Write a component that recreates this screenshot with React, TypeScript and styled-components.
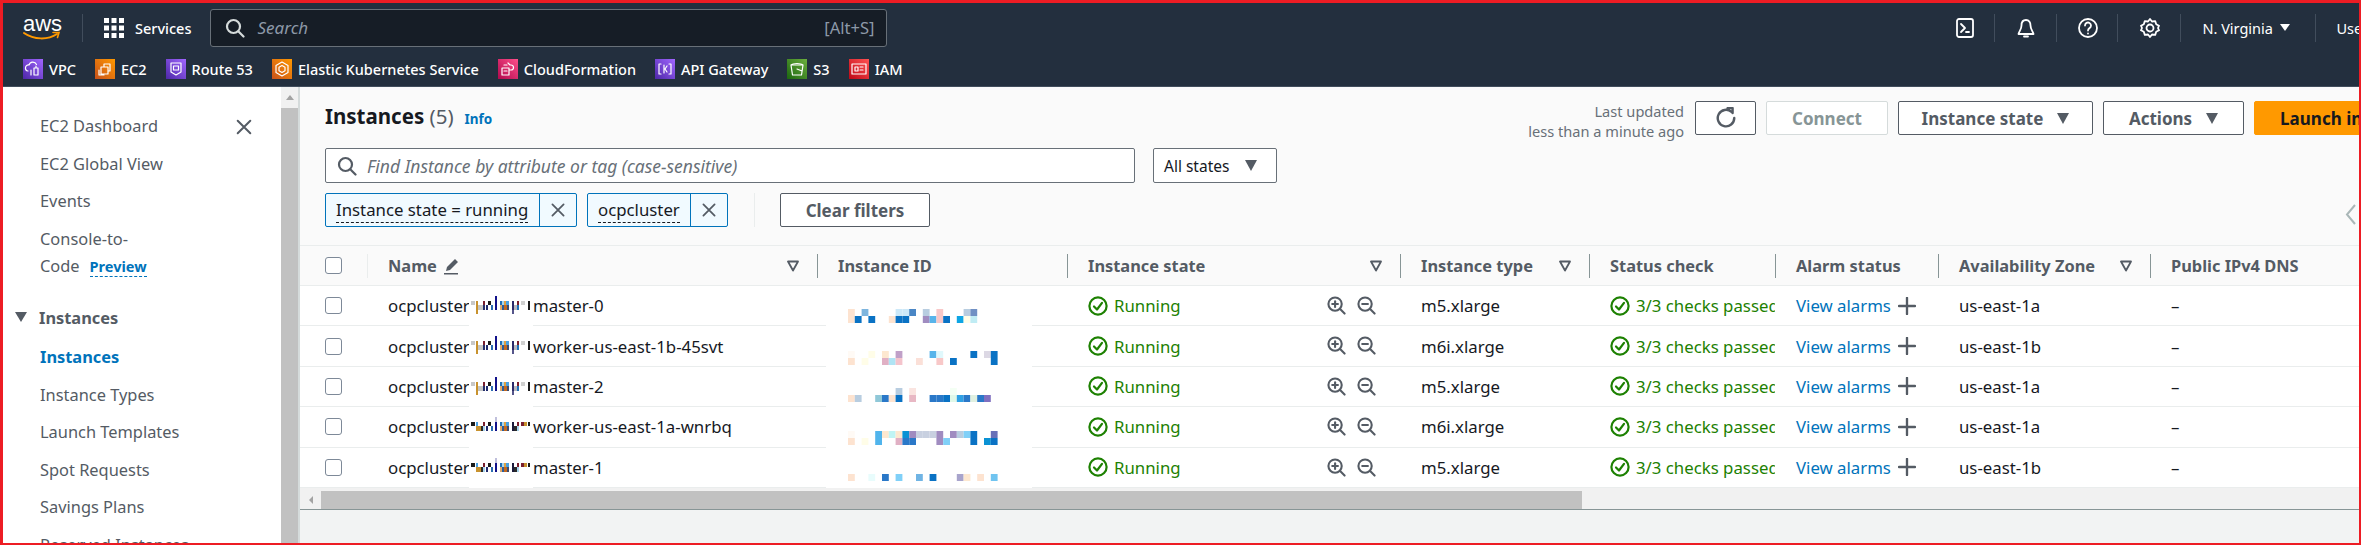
import styled, { createGlobalStyle } from "styled-components";
import type { ReactNode } from "react";

const GlobalStyle = createGlobalStyle`
  html, body {
    margin: 0;
    padding: 0;
    background: #fff;
  }
  * {
    box-sizing: border-box;
  }
`;

const FONT = `"Noto Sans", "Open Sans", sans-serif`;

const Page = styled.div`
  width: 2361px;
  height: 545px;
  border: solid #ed1c24;
  border-width: 3px 2px 2px 3px;
  display: flex;
  flex-direction: column;
  overflow: hidden;
  font-family: ${FONT};
  font-size: 16.8px;
  color: #16191f;
`;

/* top bar */
const Nav = styled.header`
  flex: 0 0 84px;
  background: #232f3e;
  border-bottom: 1px solid #414d5c;
  color: #fff;
  display: flex;
  flex-direction: column;
`;

const NavTop = styled.div`
  height: 49px;
  display: flex;
  align-items: center;
  padding-left: 20px;
`;

const LogoBox = styled.div`
  width: 38px;
  height: 26px;
  position: relative;
  flex-shrink: 0;
`;

const LogoText = styled.span`
  display: block;
  font-family: "Liberation Sans", sans-serif;
  font-size: 22px;
  line-height: 18px;
  letter-spacing: 0;
  text-align: center;
  color: #fff;
`;

const NavDivider = styled.span<{ $left: number }>`
  width: 1px;
  height: 28px;
  flex-shrink: 0;
  background: #414d5c;
  margin-left: ${({ $left }) => $left}px;
`;

const ServicesBtn = styled.div`
  display: flex;
  align-items: center;
  gap: 11px;
  margin-left: 21px;
  font-size: 14.5px;
  font-weight: 500;
  flex-shrink: 0;
`;

const SearchBox = styled.div`
  width: 677px;
  height: 38px;
  margin-left: 19px;
  flex-shrink: 0;
  background: #161d26;
  border: 1px solid #687078;
  border-radius: 3px;
  display: flex;
  align-items: center;
  padding: 0 12px 0 14px;
  gap: 12px;
  color: #8d99a8;
`;

const SearchHint = styled.span`
  font-style: italic;
  font-size: 17px;
`;

const Shortcut = styled.span`
  margin-left: auto;
  font-size: 16.5px;
`;

const NavRight = styled.div`
  display: flex;
  align-items: center;
  margin-left: 1068px;
  flex-shrink: 0;
`;

const NavIconBtn = styled.span<{ $left?: number }>`
  width: 20px;
  height: 20px;
  display: block;
  margin-left: ${({ $left }) => $left ?? 0}px;
  margin-right: 19px;
`;

const Region = styled.span`
  display: flex;
  align-items: center;
  gap: 7px;
  margin-left: 21px;
  font-size: 14.5px;
  width: 113px;
`;

const RegionCaret = styled.span`
  width: 0;
  height: 0;
  border-left: 5px solid transparent;
  border-right: 5px solid transparent;
  border-top: 7px solid #fff;
`;

const UserLabel = styled.span`
  margin-left: 20px;
  font-size: 14.5px;
`;

const NavBottom = styled.div`
  flex: 1;
  display: flex;
  align-items: center;
  padding-left: 20px;
  gap: 19px;
  font-size: 14.5px;
  font-weight: 500;
`;

const ShortcutItem = styled.span`
  display: flex;
  align-items: center;
  gap: 6px;
  flex-shrink: 0;
`;

const ServiceIcon = styled.span<{ $from: string; $to: string }>`
  width: 20px;
  height: 20px;
  display: block;
  background: linear-gradient(45deg, ${({ $from }) => $from}, ${({ $to }) => $to});
`;

/* body */
const Body = styled.div`
  flex: 1;
  min-height: 0;
  display: flex;
`;

const Sidebar = styled.aside`
  flex: 0 0 278px;
  background: #fff;
  color: #545b64;
  font-size: 16.4px;
  padding: 20px 0 0 37px;
  position: relative;
  overflow: hidden;
`;

const SideItem = styled.div<{ $active?: boolean }>`
  height: 37.5px;
  line-height: 37.5px;
  white-space: nowrap;
  color: ${({ $active }) => ($active ? "#0073bb" : "#545b64")};
  font-weight: ${({ $active }) => ($active ? 700 : 400)};
`;

const SideMulti = styled.div`
  line-height: 27px;
  margin-top: 5px;
`;

const PreviewTag = styled.span`
  color: #0073bb;
  font-size: 14.5px;
  font-weight: 700;
  margin-left: 10px;
  border-bottom: 1px dashed #0073bb;
`;

const SideSection = styled.div`
  display: flex;
  align-items: center;
  gap: 12px;
  height: 37.5px;
  margin: 19px 0 2px -25px;
  font-weight: 700;
`;

const SideCaret = styled.span`
  width: 0;
  height: 0;
  border-left: 6px solid transparent;
  border-right: 6px solid transparent;
  border-top: 10px solid #545b64;
`;

const SideClose = styled.span`
  position: absolute;
  left: 232px;
  top: 31px;
  width: 18px;
  height: 18px;
`;

const ScrollV = styled.div`
  flex: 0 0 17px;
  background: #f1f1f1;
  display: flex;
  flex-direction: column;
  align-items: center;
`;

const ScrollArrowUp = styled.span`
  flex: 0 0 21px;
  display: flex;
  align-items: center;
  justify-content: center;
  &::before {
    content: "";
    border-left: 4px solid transparent;
    border-right: 4px solid transparent;
    border-bottom: 5px solid #a3a3a3;
  }
`;

const ScrollThumbV = styled.span`
  flex: 1;
  width: 100%;
  background: #c1c1c1;
`;

const Content = styled.main`
  flex: 1;
  min-width: 0;
  background: #f2f3f3;
  border-left: 2px solid #d5dbdb;
  display: flex;
  flex-direction: column;
  position: relative;
  overflow: hidden;
`;

const Head = styled.section`
  flex: 0 0 158px;
  background: #fafafa;
  padding-left: 25px;
`;

const TitleRow = styled.div`
  width: 2138px;
  height: 61px;
  padding-top: 14px;
  display: flex;
  align-items: flex-start;
`;

const TitleBlock = styled.div`
  display: flex;
  align-items: baseline;
  gap: 11px;
`;

const Title = styled.h1`
  margin: 0;
  font-size: 20.5px;
  line-height: 30px;
  font-weight: 700;
  color: #16191f;
`;

const TitleCount = styled.span`
  font-weight: 400;
  color: #545b64;
`;

const InfoLink = styled.span`
  font-size: 13.5px;
  font-weight: 700;
  color: #0073bb;
`;

const LastUpdated = styled.div`
  flex: 1;
  text-align: right;
  font-size: 14.6px;
  line-height: 20px;
  color: #687078;
  margin-right: 11px;
`;

const Button = styled.button<{ $width: number; $kind?: "disabled" | "primary" }>`
  width: ${({ $width }) => $width}px;
  height: 34px;
  flex-shrink: 0;
  margin-right: 10px;
  display: flex;
  align-items: center;
  justify-content: center;
  gap: 14px;
  font-family: inherit;
  font-size: 17px;
  font-weight: 700;
  white-space: nowrap;
  border-radius: 2px;
  padding: 0;
  border: 1px solid
    ${({ $kind }) =>
      $kind === "disabled" ? "#d5dbdb" : $kind === "primary" ? "#ff9900" : "#545b64"};
  background: ${({ $kind }) => ($kind === "primary" ? "#ff9900" : "#fff")};
  color: ${({ $kind }) =>
    $kind === "disabled" ? "#879596" : $kind === "primary" ? "#16191f" : "#545b64"};
`;

const ButtonCaret = styled.span`
  width: 0;
  height: 0;
  border-left: 6.5px solid transparent;
  border-right: 6.5px solid transparent;
  border-top: 11px solid #545b64;
`;

const FilterRow = styled.div`
  display: flex;
  gap: 18px;
`;

const FilterInput = styled.div`
  width: 810px;
  height: 35px;
  background: #fff;
  border: 1px solid #687078;
  border-radius: 2px;
  display: flex;
  align-items: center;
  gap: 10px;
  padding-left: 11px;
  font-size: 17.5px;
  font-style: italic;
  color: #687078;
`;

const StateSelect = styled.div`
  width: 124px;
  height: 35px;
  background: #fff;
  border: 1px solid #687078;
  border-radius: 2px;
  display: flex;
  align-items: center;
  gap: 16px;
  padding-left: 10px;
  font-size: 15.5px;
  color: #16191f;
`;

const ChipRow = styled.div`
  margin-top: 10px;
  display: flex;
  align-items: center;
  height: 34px;
`;

const Chip = styled.div<{ $labelWidth: number }>`
  height: 34px;
  display: flex;
  flex-shrink: 0;
  margin-right: 10px;
  background: #f1faff;
  border: 1px solid #0073bb;
  border-radius: 2px;
  & > span:first-child {
    width: ${({ $labelWidth }) => $labelWidth}px;
  }
`;

const ChipLabel = styled.span`
  padding: 0 0 0 10px;
  line-height: 32px;
  white-space: nowrap;
  overflow: hidden;
  color: #16191f;
`;

const ChipLabelText = styled.span`
  border-bottom: 1px dashed #16191f;
  padding-bottom: 1px;
`;

const ChipClose = styled.span`
  width: 37px;
  border-left: 1px solid #0073bb;
  display: flex;
  align-items: center;
  justify-content: center;
`;

const ChipDivider = styled.span`
  width: 1px;
  height: 34px;
  background: #eaeded;
  margin: 0 25px 0 16px;
`;

const ClearBtn = styled(Button)`
  margin: 0;
`;

const Chevron = styled.span`
  position: absolute;
  left: 2045px;
  top: 117px;
  width: 12px;
  height: 21px;
`;

/* table */
const COLUMNS = "67px 450px 250px 333px 189px 186px 163px 212px 208px";

const TableHeader = styled.div`
  flex: 0 0 41px;
  display: grid;
  grid-template-columns: ${COLUMNS};
  background: #fafafa;
  border-top: 1px solid #eaeded;
  border-bottom: 1px solid #eaeded;
`;

const HeadCell = styled.div<{ $first?: boolean }>`
  position: relative;
  display: flex;
  align-items: center;
  padding: 0 18px 0 21px;
  font-size: 16.4px;
  font-weight: 700;
  color: #545b64;
  white-space: nowrap;
  &::before {
    content: "";
    position: absolute;
    left: 0;
    top: 8px;
    bottom: 7px;
    width: 1px;
    background: ${({ $first }) => ($first ? "#eaeded" : "#879596")};
  }
`;

const CheckCell = styled.div`
  display: flex;
  align-items: center;
  padding-left: 25px;
`;

const Checkbox = styled.span`
  width: 17px;
  height: 17px;
  display: block;
  background: #fff;
  border: 1.5px solid #7d8998;
  border-radius: 3px;
`;

const FilterMark = styled.span`
  margin-left: auto;
  width: 12px;
  height: 12px;
  display: block;
  & svg {
    display: block;
  }
`;

const Row = styled.div`
  flex: 0 0 40.4px;
  display: grid;
  grid-template-columns: ${COLUMNS};
  background: #fff;
  border-bottom: 1px solid #eaeded;
`;

const Cell = styled.div`
  position: relative;
  display: flex;
  align-items: center;
  padding-left: 21px;
  min-width: 0;
  white-space: nowrap;
  overflow: hidden;
  color: #16191f;
`;

const OverlayCell = styled(Cell)`
  overflow: visible;
`;

const Patch = styled.span<{ $left: number; $width: number }>`
  position: absolute;
  left: ${({ $left }) => $left}px;
  width: ${({ $width }) => $width}px;
  top: 0;
  bottom: -1px;
  background: #fff;
`;

const PatchDrawing = styled.svg<{ $left: number; $top: number }>`
  position: absolute;
  left: ${({ $left }) => $left}px;
  top: ${({ $top }) => $top}px;
`;

const NamePrefix = styled.span`
  flex: 0 0 145px;
`;

const StateWrap = styled.span`
  display: flex;
  align-items: center;
  gap: 6px;
  color: #1d8102;
`;

const ZoomIcons = styled.span`
  position: absolute;
  left: 260px;
  top: 10px;
  display: flex;
  gap: 11px;
`;

const AlarmLink = styled.span`
  color: #0073bb;
`;

const AlarmPlus = styled.span`
  width: 18px;
  height: 18px;
  display: block;
  margin-left: 7px;
`;

const HScroll = styled.div`
  flex: 0 0 21px;
  background: #f1f1f1;
  display: flex;
  align-items: stretch;
  padding-top: 3px;
`;

const HScrollArrow = styled.span`
  flex: 0 0 21px;
  display: flex;
  align-items: center;
  justify-content: center;
  &::before {
    content: "";
    border-top: 4px solid transparent;
    border-bottom: 4px solid transparent;
    border-right: 4px solid #a3a3a3;
  }
`;

const HScrollThumb = styled.span`
  width: 1261px;
  background: #c1c1c1;
`;

const Footer = styled.div`
  flex: 1;
  background: #f2f3f3;
  border-top: 1px solid #879596;
`;

/* icons */
type SvgProps = { size?: number; color?: string; width?: number; children: ReactNode };

const Line = ({ size = 20, color = "#fff", width = 2, children }: SvgProps) => (
  <svg
    width={size}
    height={size}
    viewBox="0 0 20 20"
    fill="none"
    stroke={color}
    strokeWidth={width}
    strokeLinecap="round"
    strokeLinejoin="round"
    style={{ display: "block" }}
  >
    {children}
  </svg>
);

const SearchGlyph = ({ color, size = 20 }: { color: string; size?: number }) => (
  <Line size={size} color={color} width={2.2}>
    <circle cx="8.5" cy="8.5" r="6.5" />
    <path d="M13.5 13.5 18.5 18.5" />
  </Line>
);

const CrossGlyph = ({ color = "#545b64", size = 18 }: { color?: string; size?: number }) => (
  <Line size={size} color={color} width={2.2}>
    <path d="M3 3 17 17M17 3 3 17" />
  </Line>
);

const OkGlyph = () => (
  <Line color="#1d8102" width={2.2}>
    <circle cx="10" cy="10" r="8.6" />
    <path d="M6 10.5 9 13.5 14 6.8" />
  </Line>
);

const ZoomGlyph = ({ plus }: { plus?: boolean }) => (
  <Line size={19} color="#545b64" width={2.2}>
    <circle cx="8.5" cy="8.5" r="7" />
    <path d="M13.8 13.8 18.5 18.5M5.5 8.5h6" />
    {plus && <path d="M8.5 5.5v6" />}
  </Line>
);

const TriangleOutline = () => (
  <FilterMark>
    <svg width="12" height="12" viewBox="0 0 12 12" fill="none" stroke="#545b64" strokeWidth="1.8" strokeLinejoin="round">
      <path d="M1 1.5h10L6 10.5z" />
    </svg>
  </FilterMark>
);

const SERVICE_GLYPHS: Record<string, ReactNode> = {
  vpc: <path d="M5 12a3 3 0 0 1 1-6 4 4 0 0 1 7.500-.5M11 9h4v7h-4zM13 9V7M8 11v5" />,
  ec2: <path d="M6 8h7v7H6zM9 8V5h6v7h-2M4 11v5h5" />,
  route53: <path d="M5 4h10v9l-5 3-5-3zM7.500 7h5v4h-5z" />,
  eks: <path d="M10 3l6 3.500v7L10 17l-6-3.500v-7zM10 6.500l3 1.800v3.400l-3 1.800-3-1.800V8.300z" />,
  cloudformation: <path d="M4 9h7v7H4zM6 6h3M11 11h2a2.500 2.500 0 0 0 0-5h-1l-2-2M6 12h3" />,
  api: <path d="M6 5H4v10h2M14 5h2v10h-2M9 6v8M12 7l-2 3 2 3" />,
  s3: <path d="M4 6h12l-1.500 10h-9zM4 6c2-2 10-2 12 0M10 10l5 2" />,
  iam: <path d="M3 5h14v10H3zM6 8h3v4H6zM11 8h3M11 11h3" />,
};

const SHORTCUTS = [
  { key: "vpc", label: "VPC", from: "#4d27a8", to: "#a166ff" },
  { key: "ec2", label: "EC2", from: "#c8511b", to: "#ff9900" },
  { key: "route53", label: "Route 53", from: "#4d27a8", to: "#a166ff" },
  { key: "eks", label: "Elastic Kubernetes Service", from: "#c8511b", to: "#ff9900" },
  { key: "cloudformation", label: "CloudFormation", from: "#b0084d", to: "#ff4f8b" },
  { key: "api", label: "API Gateway", from: "#4d27a8", to: "#a166ff" },
  { key: "s3", label: "S3", from: "#1b660f", to: "#6cae3e" },
  { key: "iam", label: "IAM", from: "#bd0816", to: "#ff5252" },
];

/* redaction mosaics, taken block by block from the picture */
const P = {
  peach: "#fde3d0",
  cream: "#fffde8",
  blue: "#0a72c4",
  mid: "#2a78c8",
  sky: "#58b4ea",
  pale: "#cce8f8",
  steel: "#b8cde0",
  pink: "#f8c8c8",
  rose: "#e0b0c4",
  lilac: "#a08cc0",
  ice: "#c0ecf4",
};

type Block = [number, number, string];

const ID_MOSAICS: { top: number; blocks: Block[] }[] = [
  {
    top: 23,
    blocks: [
      [0, 0, P.peach], [2, 0, "#7db5de"], [7, 0, P.pale], [8, 0, P.pale], [9, 0, "#4a86c5"], [11, 0, P.steel],
      [13, 0, P.pink], [17, 0, P.steel], [18, 0, "#7090c4"],
      [0, 1, P.peach], [1, 1, P.blue], [3, 1, P.blue], [6, 1, P.peach], [7, 1, P.blue], [8, 1, P.blue],
      [11, 1, P.lilac], [12, 1, P.sky], [13, 1, P.pink], [14, 1, P.blue], [16, 1, "#0ea5e4"], [17, 1, P.cream], [18, 1, P.ice],
    ],
  },
  {
    top: 25,
    blocks: [
      [0, 0, "#fffaf5"], [3, 0, P.cream], [5, 0, "#fde8d0"], [7, 0, "#c0a0c8"], [12, 0, P.sky], [13, 0, "#e0f8fc"],
      [18, 0, P.blue], [20, 0, "#dcd8e4"], [21, 0, P.blue],
      [0, 1, P.peach], [2, 1, P.cream], [5, 1, P.rose], [6, 1, "#b0e4f4"], [7, 1, "#f4c4cc"], [10, 1, "#fbe0d8"],
      [13, 1, P.pink], [15, 1, P.blue], [21, 1, P.blue],
    ],
  },
  {
    top: 21,
    blocks: [
      [7, 0, P.steel], [9, 0, "#fae4e0"], [15, 0, "#f4fff4"],
      [0, 1, P.peach], [1, 1, P.steel], [4, 1, "#90c8d8"], [5, 1, P.mid], [6, 1, P.peach], [7, 1, P.blue], [9, 1, "#e8b8c4"],
      [12, 1, P.mid], [13, 1, P.mid], [14, 1, P.blue], [15, 1, "#e0f8e8"], [16, 1, "#30a0e4"], [17, 1, P.mid],
      [18, 1, "#e0f0e0"], [19, 1, P.mid], [20, 1, "#8070c0"],
    ],
  },
  {
    top: 24,
    blocks: [
      [0, 0, "#fffaf5"], [4, 0, "#50b4ec"], [5, 0, "#fde8d0"], [6, 0, "#c0f4f4"], [7, 0, "#fde8d0"], [8, 0, "#0a92d4"],
      [9, 0, P.lilac], [10, 0, "#c8d0e0"], [11, 0, "#c8d0e0"], [12, 0, "#c8d0e0"], [13, 0, P.lilac], [15, 0, P.lilac],
      [16, 0, P.steel], [17, 0, "#80d0f8"], [18, 0, P.blue], [21, 0, "#6870b8"],
      [0, 1, P.peach], [2, 1, P.cream], [4, 1, "#50b4ec"], [7, 1, P.rose], [8, 1, P.mid], [9, 1, P.mid], [13, 1, P.lilac],
      [14, 1, "#80d0f8"], [18, 1, P.blue], [20, 1, "#0a92d4"], [21, 1, P.blue],
    ],
  },
  {
    top: 26,
    blocks: [
      [0, 0, P.peach], [3, 0, "#e8fcfc"], [5, 0, P.mid], [7, 0, "#80d0f8"], [10, 0, "#70b4e4"], [12, 0, P.blue],
      [16, 0, "#a8a4cc"], [17, 0, "#fde8d0"], [19, 0, P.peach], [21, 0, "#70c4f0"],
    ],
  },
];

type Bar = [number, number, number, number, string];

const NAME_BARS_LIGHT: Bar[] = [
  [2, 5, 4, 4, "#c8c8c8"], [7, 5, 2, 13, "#c8922e"], [9, 9, 5, 5, "#c4c4c4"], [14, 5, 2, 4, "#7a1f2e"], [14, 9, 2, 5, "#26306a"],
  [17, 9, 2, 5, "#1f2a6e"], [19, 5, 3, 4, "#1a1a1a"], [22, 9, 2, 5, "#2a6cb0"], [26, 0, 2, 14, "#12128a"],
  [31, 5, 2, 4, "#1f6fb8"], [31, 9, 2, 5, "#e0a868"], [33, 5, 2, 4, "#a8d4ec"], [33, 9, 2, 5, "#2a5c9c"],
  [35, 5, 2, 4, "#e0a040"], [35, 9, 3, 5, "#c06820"], [37, 5, 3, 4, "#4aa0e0"], [38, 9, 2, 5, "#3a4a70"],
  [43, 5, 2, 9, "#2a2a6a"], [43, 14, 2, 4, "#55558a"], [45, 9, 3, 5, "#b8b8c0"], [48, 5, 2, 4, "#7a1f2e"], [48, 9, 2, 5, "#1f6fb8"],
  [52, 5, 4, 4, "#d0d0d0"], [59, 5, 2, 9, "#1a1a1a"],
];

const NAME_BARS_DARK: Bar[] = [
  [2, 5, 4, 4, "#1a1a1a"], [7, 5, 2, 4, "#4aa0e0"], [7, 9, 5, 5, "#c8922e"], [12, 9, 2, 5, "#2a2a2a"], [14, 5, 2, 4, "#7a1f2e"], [14, 9, 2, 5, "#a8d4ec"],
  [17, 9, 2, 5, "#1f2a6e"], [19, 5, 3, 4, "#1a1a1a"], [22, 9, 2, 5, "#2a6cb0"], [26, 0, 2, 5, "#c0c0dc"], [26, 5, 2, 9, "#12128a"],
  [31, 5, 2, 4, "#1f6fb8"], [31, 9, 2, 5, "#e0a868"], [33, 5, 2, 4, "#a8d4ec"], [33, 9, 2, 5, "#2a5c9c"],
  [35, 5, 2, 4, "#e0a040"], [35, 9, 3, 5, "#c06820"], [37, 5, 3, 4, "#4aa0e0"], [38, 9, 2, 5, "#3a4a70"],
  [43, 5, 2, 9, "#1a1a3a"], [45, 9, 3, 5, "#2a2a2a"], [48, 5, 2, 4, "#7a1f2e"], [48, 9, 2, 5, "#a8d4ec"],
  [52, 5, 3, 4, "#7a1f2e"], [55, 5, 3, 4, "#c8922e"], [59, 5, 2, 4, "#1a1a1a"],
];

const ROWS = [
  { suffix: "master-0", dark: false, type: "m5.xlarge", zone: "us-east-1a" },
  { suffix: "worker-us-east-1b-45svt", dark: false, type: "m6i.xlarge", zone: "us-east-1b" },
  { suffix: "master-2", dark: false, type: "m5.xlarge", zone: "us-east-1a" },
  { suffix: "worker-us-east-1a-wnrbq", dark: true, type: "m6i.xlarge", zone: "us-east-1a" },
  { suffix: "master-1", dark: true, type: "m5.xlarge", zone: "us-east-1b" },
];

const SIDE_BELOW = ["Instance Types", "Launch Templates", "Spot Requests", "Savings Plans", "Reserved Instances"];

const App = () => {
  return (
    <>
      <GlobalStyle />
      <Page>
        <Nav>
          <NavTop>
            <LogoBox>
              <LogoText>aws</LogoText>
              <svg width="38" height="10" viewBox="0 0 38 10" fill="none" style={{ position: "absolute", left: 0, bottom: 0 }}>
                <path d="M1 2c10 7 24 7 33 1" stroke="#ff9900" strokeWidth="2" strokeLinecap="round" />
                <path d="M30 1.500h6l-1.500 5" stroke="#ff9900" strokeWidth="1.600" strokeLinecap="round" />
              </svg>
            </LogoBox>
            <NavDivider $left={21} />
            <ServicesBtn>
              <svg width="20" height="20" viewBox="0 0 20 20" fill="#fff">
                {[0, 7.5, 15].flatMap((y) =>
                  [0, 7.5, 15].map((x) => <rect key={`${x}-${y}`} x={x} y={y} width="5" height="5" />)
                )}
              </svg>
              Services
            </ServicesBtn>
            <SearchBox>
              <SearchGlyph color="#d5dbdb" />
              <SearchHint>Search</SearchHint>
              <Shortcut>[Alt+S]</Shortcut>
            </SearchBox>
            <NavRight>
              <NavIconBtn>
                <Line width={1.8}>
                  <rect x="2" y="1" width="16" height="18" rx="2" />
                  <path d="M6 6l4 4-4 4M11 14h3" />
                </Line>
              </NavIconBtn>
              <NavDivider $left={0} />
              <NavIconBtn $left={21}>
                <Line width={1.8}>
                  <path d="M10 2c-3 0-4.500 2.500-4.500 5.500 0 4-2.500 6-3 8.500h15c-.5-2.500-3-4.500-3-8.500C14.500 4.500 13 2 10 2zM8 18.500h4" />
                </Line>
              </NavIconBtn>
              <NavDivider $left={1} />
              <NavIconBtn $left={21}>
                <Line width={1.8}>
                  <circle cx="10" cy="10" r="9" />
                  <path d="M7 7.500a3 3 0 1 1 4.500 2.600c-1 .6-1.500 1.200-1.500 2.400M10 15.500v.1" />
                </Line>
              </NavIconBtn>
              <NavDivider $left={0} />
              <NavIconBtn $left={22}>
                <Line width={1.8}>
                  <path d="M10 1l2 2.500 3.200-.4 1 3.100 2.800 1.500L18 10l1 2.300-2.800 1.500-1 3.100-3.200-.4L10 19l-2-2.500-3.200.4-1-3.100L1 12.300 2 10 1 7.700l2.800-1.500 1-3.100 3.200.4z" />
                  <circle cx="10" cy="10" r="3.500" />
                </Line>
              </NavIconBtn>
              <NavDivider $left={1} />
              <Region>
                N. Virginia
                <RegionCaret />
              </Region>
              <NavDivider $left={0} />
              <UserLabel>User</UserLabel>
            </NavRight>
          </NavTop>
          <NavBottom>
            {SHORTCUTS.map((s) => (
              <ShortcutItem key={s.key}>
                <ServiceIcon $from={s.from} $to={s.to}>
                  <Line width={1.2}>{SERVICE_GLYPHS[s.key]}</Line>
                </ServiceIcon>
                {s.label}
              </ShortcutItem>
            ))}
          </NavBottom>
        </Nav>
        <Body>
          <Sidebar>
            <SideClose>
              <CrossGlyph />
            </SideClose>
            <SideItem>EC2 Dashboard</SideItem>
            <SideItem>EC2 Global View</SideItem>
            <SideItem>Events</SideItem>
            <SideMulti>
              Console-to-
              <br />
              Code<PreviewTag>Preview</PreviewTag>
            </SideMulti>
            <SideSection>
              <SideCaret />
              Instances
            </SideSection>
            <SideItem $active>Instances</SideItem>
            {SIDE_BELOW.map((label) => (
              <SideItem key={label}>{label}</SideItem>
            ))}
          </Sidebar>
          <ScrollV>
            <ScrollArrowUp />
            <ScrollThumbV />
          </ScrollV>
          <Content>
            <Head>
              <TitleRow>
                <TitleBlock>
                  <Title>
                    Instances <TitleCount>(5)</TitleCount>
                  </Title>
                  <InfoLink>Info</InfoLink>
                </TitleBlock>
                <LastUpdated>
                  Last updated
                  <br />
                  less than a minute ago
                </LastUpdated>
                <Button $width={61} aria-label="Refresh">
                  <Line size={22} color="#545b64" width={2.2}>
                    <path d="M15 4.500A7.500 7.500 0 1 0 17.500 10M11.500 1h4.500v4.500" />
                  </Line>
                </Button>
                <Button $width={122} $kind="disabled">
                  Connect
                </Button>
                <Button $width={195}>
                  Instance state
                  <ButtonCaret />
                </Button>
                <Button $width={141}>
                  Actions
                  <ButtonCaret />
                </Button>
                <Button $width={199} $kind="primary">
                  Launch instances
                </Button>
              </TitleRow>
              <FilterRow>
                <FilterInput>
                  <SearchGlyph color="#545b64" />
                  Find Instance by attribute or tag (case-sensitive)
                </FilterInput>
                <StateSelect>
                  All states
                  <ButtonCaret />
                </StateSelect>
              </FilterRow>
              <ChipRow>
                <Chip $labelWidth={213}>
                  <ChipLabel>
                    <ChipLabelText>Instance state = running</ChipLabelText>
                  </ChipLabel>
                  <ChipClose>
                    <CrossGlyph size={16} />
                  </ChipClose>
                </Chip>
                <Chip $labelWidth={102}>
                  <ChipLabel>
                    <ChipLabelText>ocpcluster</ChipLabelText>
                  </ChipLabel>
                  <ChipClose>
                    <CrossGlyph size={16} />
                  </ChipClose>
                </Chip>
                <ChipDivider />
                <ClearBtn $width={150}>Clear filters</ClearBtn>
              </ChipRow>
              <Chevron>
                <svg width="12" height="21" viewBox="0 0 12 21" fill="none" stroke="#aab7b8" strokeWidth="2">
                  <path d="M10 1 2 10.500 10 20" />
                </svg>
              </Chevron>
            </Head>
            <TableHeader>
              <CheckCell>
                <Checkbox />
              </CheckCell>
              <HeadCell $first>
                Name
                <svg width="18" height="18" viewBox="0 0 18 18" fill="#545b64" style={{ marginLeft: 6 }}>
                  <path d="M12 2l3 3-8 8-4 1 1-4zM1 16h14v1.500H1z" />
                </svg>
                <TriangleOutline />
              </HeadCell>
              <HeadCell>Instance ID</HeadCell>
              <HeadCell>
                Instance state
                <TriangleOutline />
              </HeadCell>
              <HeadCell>
                Instance type
                <TriangleOutline />
              </HeadCell>
              <HeadCell>Status check</HeadCell>
              <HeadCell>Alarm status</HeadCell>
              <HeadCell>
                Availability Zone
                <TriangleOutline />
              </HeadCell>
              <HeadCell>Public IPv4 DNS</HeadCell>
            </TableHeader>
            {ROWS.map((row, i) => (
              <Row key={row.suffix}>
                <CheckCell>
                  <Checkbox />
                </CheckCell>
                <OverlayCell>
                  <NamePrefix>ocpcluster</NamePrefix>
                  {row.suffix}
                  <Patch $left={102} $width={64}>
                    <PatchDrawing $left={0} $top={10} width="64" height="20" viewBox="0 0 64 20">
                      {(row.dark ? NAME_BARS_DARK : NAME_BARS_LIGHT).map(([x, y, w, h, c]) => (
                        <rect key={`${x}-${y}`} x={x} y={y} width={w} height={h} fill={c} />
                      ))}
                    </PatchDrawing>
                  </Patch>
                </OverlayCell>
                <OverlayCell>
                  <Patch $left={9} $width={206}>
                    <PatchDrawing $left={22} $top={ID_MOSAICS[i].top} width="150" height="14" viewBox="0 0 150 14">
                      {ID_MOSAICS[i].blocks.map(([col, r, c]) => (
                        <rect key={`${col}-${r}`} x={col * 6.8} y={r * 7} width="6.8" height="7" fill={c} />
                      ))}
                    </PatchDrawing>
                  </Patch>
                </OverlayCell>
                <Cell>
                  <StateWrap>
                    <OkGlyph />
                    Running
                  </StateWrap>
                  <ZoomIcons>
                    <ZoomGlyph plus />
                    <ZoomGlyph />
                  </ZoomIcons>
                </Cell>
                <Cell>{row.type}</Cell>
                <Cell>
                  <StateWrap>
                    <OkGlyph />
                    3/3 checks passed
                  </StateWrap>
                </Cell>
                <Cell>
                  <AlarmLink>View alarms</AlarmLink>
                  <AlarmPlus>
                    <Line size={18} color="#545b64" width={2.6}>
                      <path d="M10 1v18M1 10h18" />
                    </Line>
                  </AlarmPlus>
                </Cell>
                <Cell>{row.zone}</Cell>
                <Cell>–</Cell>
              </Row>
            ))}
            <HScroll>
              <HScrollArrow />
              <HScrollThumb />
            </HScroll>
            <Footer />
          </Content>
        </Body>
      </Page>
    </>
  );
};

export default App;
